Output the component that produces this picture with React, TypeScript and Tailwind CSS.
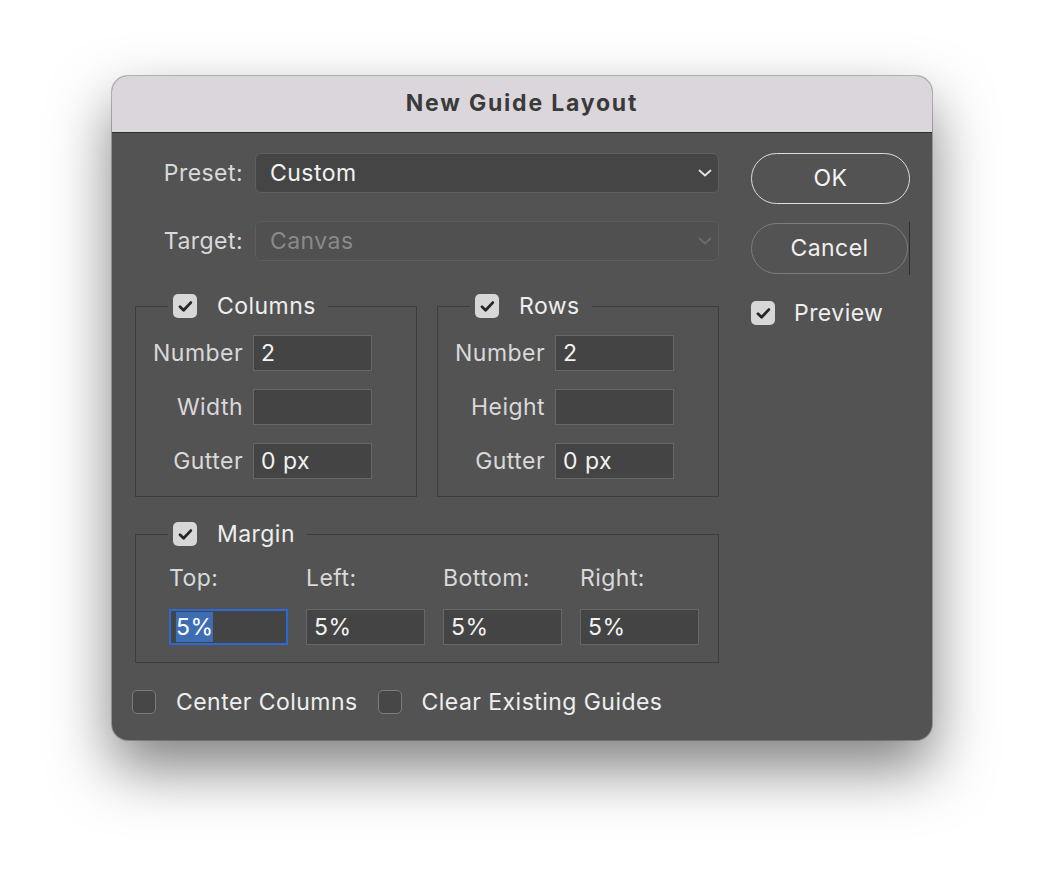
import React from "react";

const font = { fontFamily: "Inter, 'Liberation Sans', sans-serif" };

function Check({ checked = true }: { checked?: boolean }) {
  if (!checked) {
    return (
      <span className="block w-[24px] h-[24px] shrink-0 rounded-[5px] bg-[#474747] border border-[#7c7c7c]" />
    );
  }
  return (
    <span className="flex items-center justify-center w-[24px] h-[24px] shrink-0 rounded-[5px] bg-[#d7d7d7]">
      <svg width="15" height="13" viewBox="0 0 15 13" fill="none">
        <path d="M2 6.8 L5.6 10.2 L12.8 2.6" stroke="#262626" strokeWidth="2.8" strokeLinecap="round" strokeLinejoin="round" />
      </svg>
    </span>
  );
}

function Chevron({ color }: { color: string }) {
  return (
    <svg width="14" height="8" viewBox="0 0 14 8" fill="none">
      <path d="M1.5 1.5 L7 6.5 L12.5 1.5" stroke={color} strokeWidth="1.8" strokeLinecap="round" strokeLinejoin="round" />
    </svg>
  );
}

function Field({ label, value }: { label: string; value?: string }) {
  return (
    <div className="flex items-center">
      <span className="w-[117px] pr-[10px] text-right text-[#d9d9d9]">{label}</span>
      <div className="w-[119px] h-[36px] bg-[#444444] border border-[#676767] flex items-center px-[7px] text-[#f2f2f2]">
        {value}
      </div>
    </div>
  );
}

function Group({ title, fields }: { title: string; fields: [string, string][] }) {
  return (
    <fieldset className="w-[282px] border border-[#3d3d3d] pb-[17px]">
      <legend className="ml-[32px] pl-[5px] pr-[12px] h-[24px] flex items-center gap-[20px] text-[#eeeeee]">
        <Check />
        <span>{title}</span>
      </legend>
      <div className="pt-[17px] flex flex-col gap-[18px]">
        {fields.map(([l, v]) => (
          <Field key={l} label={l} value={v} />
        ))}
      </div>
    </fieldset>
  );
}

export default function App() {
  const margins = ["Top:", "Left:", "Bottom:", "Right:"];
  return (
    <div className="w-[1044px] h-[888px] bg-white pl-[112px] pt-[76px]" style={font}>
      <div className="w-[820px] h-[664px] rounded-[16px] overflow-hidden bg-[#535353] shadow-[0_28px_60px_rgba(0,0,0,0.5)] ring-1 ring-black/25 flex flex-col text-[23px] leading-none tracking-[0.45px]">
        <div className="h-[57px] shrink-0 bg-[#dbd6db] border-b border-[#2e2e2e] flex items-center justify-center">
          <span className="font-bold text-[#3a3a3a] text-[23px] tracking-[1.8px] -mt-[2px]">New Guide Layout</span>
        </div>
        <div className="flex pl-[23px] pr-[22px] pt-[20px]">
          <div className="w-[584px] flex flex-col">
            <div className="flex items-center h-[40px]">
              <span className="w-[120px] pr-[12px] text-right text-[#d9d9d9]">Preset:</span>
              <div className="w-[464px] h-[40px] rounded-[6px] bg-[#454545] border border-[#5f5f5f] flex items-center justify-between pl-[14px] pr-[6px] text-[#f2f2f2]">
                <span>Custom</span>
                <Chevron color="#e6e6e6" />
              </div>
            </div>
            <div className="flex items-center h-[40px] mt-[28px]">
              <span className="w-[120px] pr-[12px] text-right text-[#d9d9d9]">Target:</span>
              <div className="w-[464px] h-[40px] rounded-[6px] bg-[#505050] border border-[#5e5e5e] flex items-center justify-between pl-[14px] pr-[6px] text-[#8a8a8a]">
                <span>Canvas</span>
                <Chevron color="#6c6c6c" />
              </div>
            </div>
            <div className="flex gap-[20px] mt-[33px]">
              <Group title="Columns" fields={[["Number", "2"], ["Width", ""], ["Gutter", "0 px"]]} />
              <Group title="Rows" fields={[["Number", "2"], ["Height", ""], ["Gutter", "0 px"]]} />
            </div>
            <fieldset className="mt-[25px] w-[584px] border border-[#3d3d3d] pb-[17px]">
              <legend className="ml-[32px] pl-[5px] pr-[12px] h-[24px] flex items-center gap-[20px] text-[#eeeeee]">
                <Check />
                <span>Margin</span>
              </legend>
              <div className="grid grid-cols-[119px_119px_119px_119px] gap-x-[18px] pl-[33px] pt-[20px]">
                {margins.map((m) => (
                  <span key={m} className="text-[#d9d9d9] h-[24px] flex items-center">{m}</span>
                ))}
                {margins.map((m, i) =>
                  i === 0 ? (
                    <div key={m} className="mt-[19px] h-[36px] bg-[#444444] border-2 border-[#2d68d6] flex items-center px-[5px]">
                      <span className="bg-[#3e6db3] text-white h-[30px] flex items-center">5%</span>
                    </div>
                  ) : (
                    <div key={m} className="mt-[19px] h-[36px] bg-[#444444] border border-[#676767] flex items-center px-[7px] text-[#f2f2f2]">
                      5%
                    </div>
                  )
                )}
              </div>
            </fieldset>
            <div className="flex items-center mt-[27px] -ml-[3px] text-[#eeeeee]">
              <Check checked={false} />
              <span className="ml-[20px]">Center Columns</span>
              <span className="ml-[20px]"><Check checked={false} /></span>
              <span className="ml-[20px]">Clear Existing Guides</span>
            </div>
          </div>
          <div className="ml-[32px] w-[159px] flex flex-col">
            <div className="h-[51px] rounded-full border-[1.5px] border-[#dcdcdc] flex items-center justify-center text-[#f4f4f4]">
              OK
            </div>
            <div className="flex mt-[19px]">
              <div className="w-[159px] h-[51px] rounded-full border-[1.5px] border-[#7d7d7d] flex items-center justify-center text-[#f0f0f0]">
                Cancel
              </div>
              <div className="w-px h-[53px] bg-[#2e2e2e] ml-[1px] -mt-[1px]" />
            </div>
            <div className="flex items-center mt-[26px] text-[#eeeeee]">
              <Check />
              <span className="ml-[19px]">Preview</span>
            </div>
          </div>
        </div>
      </div>
    </div>
  );
}
